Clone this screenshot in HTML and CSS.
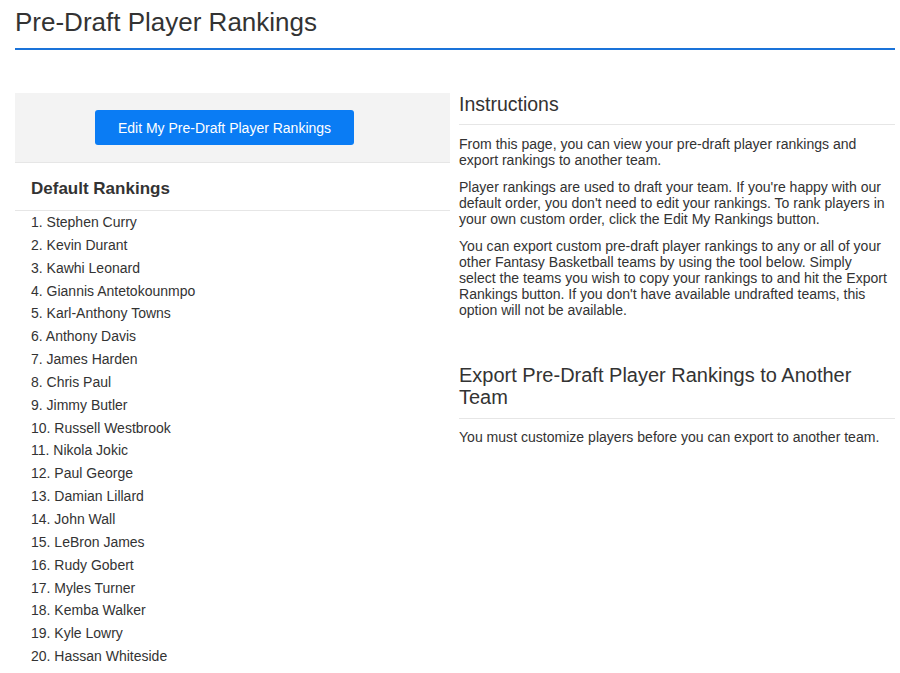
FILE: index.html
```html
<!DOCTYPE html>
<html>
<head>
<meta charset="utf-8">
<link rel="stylesheet" href="styles.css">
</head>
<body>
<div class="page">
  <header class="page-header">
    <h1>Pre-Draft Player Rankings</h1>
  </header>
  <div class="columns">
    <div class="left">
      <div class="action-panel">
        <button class="btn-primary">Edit My Pre-Draft Player Rankings</button>
      </div>
      <h2 class="list-title">Default Rankings</h2>
      <ol class="rank-list">
        <li>1. Stephen Curry</li>
        <li>2. Kevin Durant</li>
        <li>3. Kawhi Leonard</li>
        <li>4. Giannis Antetokounmpo</li>
        <li>5. Karl-Anthony Towns</li>
        <li>6. Anthony Davis</li>
        <li>7. James Harden</li>
        <li>8. Chris Paul</li>
        <li>9. Jimmy Butler</li>
        <li>10. Russell Westbrook</li>
        <li>11. Nikola Jokic</li>
        <li>12. Paul George</li>
        <li>13. Damian Lillard</li>
        <li>14. John Wall</li>
        <li>15. LeBron James</li>
        <li>16. Rudy Gobert</li>
        <li>17. Myles Turner</li>
        <li>18. Kemba Walker</li>
        <li>19. Kyle Lowry</li>
        <li>20. Hassan Whiteside</li>
      </ol>
    </div>
    <div class="right">
      <h3 class="section-title">Instructions</h3>
      <p>From this page, you can view your pre-draft player rankings and export rankings to another team.</p>
      <p>Player rankings are used to draft your team. If you're happy with our default order, you don't need to edit your rankings. To rank players in your own custom order, click the Edit My Rankings button.</p>
      <p>You can export custom pre-draft player rankings to any or all of your other Fantasy Basketball teams by using the tool below. Simply select the teams you wish to copy your rankings to and hit the Export Rankings button. If you don't have available undrafted teams, this option will not be available.</p>
      <h3 class="section-title export-title">Export Pre-Draft Player Rankings to Another Team</h3>
      <p>You must customize players before you can export to another team.</p>
    </div>
  </div>
</div>
</body>
</html>
```

FILE: styles.css
```css
html, body {
  margin: 0;
  padding: 0;
  background: #ffffff;
}
body {
  font-family: "Liberation Sans", Arial, sans-serif;
  color: #333333;
}
.page {
  width: 880px;
  margin-left: 15px;
}
.page-header {
  border-bottom: 2px solid #1a73d9;
  height: 50px;
  box-sizing: border-box;
}
.page-header h1 {
  margin: 0;
  padding-top: 7px;
  font-size: 26px;
  line-height: 30px;
  font-weight: normal;
  color: #333333;
}
.columns {
  display: flex;
  gap: 9px;
  margin-top: 43px;
}
.left {
  width: 435px;
  flex: none;
}
.right {
  flex: 1;
}
.action-panel {
  background: #f3f3f3;
  border-bottom: 1px solid #e6e6e6;
  padding: 17px 0 17px 80px;
  height: 70px;
  box-sizing: border-box;
}
.btn-primary {
  width: 259px;
  height: 35px;
  background: #0a7cf4;
  color: #ffffff;
  border: none;
  border-radius: 3px;
  font-family: "Liberation Sans", Arial, sans-serif;
  font-size: 14px;
  padding: 0;
}
.list-title {
  margin: 0;
  padding: 15px 16px 11px;
  font-size: 17px;
  line-height: 21px;
  font-weight: bold;
  color: #333333;
  border-bottom: 1px solid #e6e6e6;
}
.rank-list {
  list-style: none;
  margin: 0;
  padding: 0 0 0 16px;
}
.rank-list li {
  font-size: 14px;
  line-height: 22.85px;
  color: #333333;
}
.section-title {
  margin: 0;
  font-size: 19.5px;
  line-height: 22px;
  font-weight: normal;
  color: #333333;
  padding-bottom: 9px;
  border-bottom: 1px solid #e6e6e6;
}
.right p {
  margin: 11px 0 0;
  padding-right: 4px;
  font-size: 14.05px;
  line-height: 16px;
  color: #333333;
}
.export-title {
  margin-top: 46px;
  padding-bottom: 10px;
  font-size: 20px;
}
.export-title + p {
  margin-top: 10px;
}
```
